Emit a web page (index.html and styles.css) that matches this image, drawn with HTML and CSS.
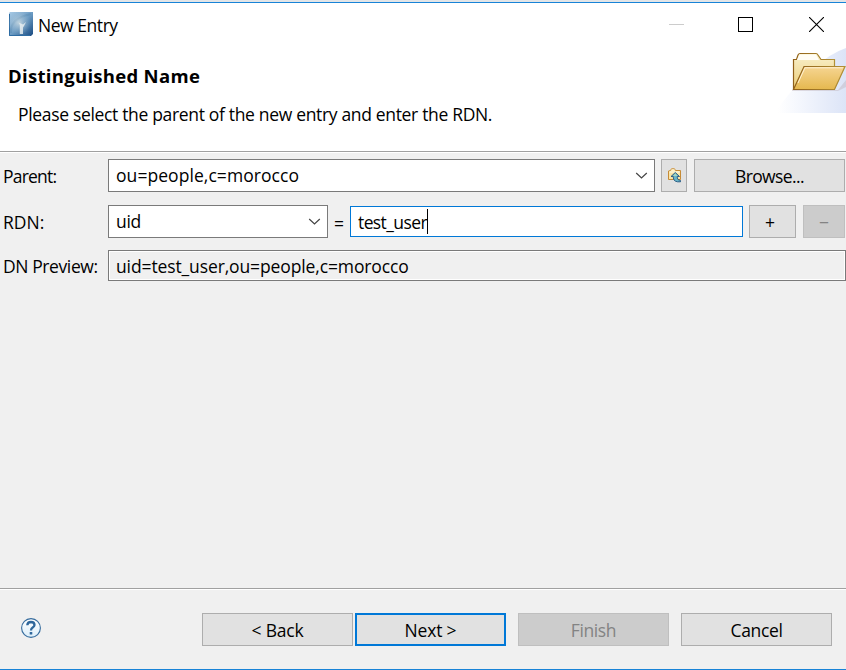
FILE: index.html
```html
<!DOCTYPE html>
<html lang="en">
<head>
<meta charset="utf-8">
<title>New Entry</title>
<link rel="stylesheet" href="styles.css">
</head>
<body>
<main class="dialog">
  <header class="header">
    <div class="titlebar">
      <svg class="app-icon" width="24" height="24" viewBox="0 0 24 24">
        <defs>
          <linearGradient id="app" x1="0" y1="0" x2="1" y2="1"><stop offset="0" stop-color="#a9cbe6"/><stop offset=".5" stop-color="#6c9cc4"/><stop offset="1" stop-color="#174880"/></linearGradient>
          <radialGradient id="glow" cx=".42" cy=".45" r=".5"><stop offset="0" stop-color="#e1e8e8" stop-opacity=".7"/><stop offset="1" stop-color="#9bb9cd" stop-opacity="0"/></radialGradient>
        </defs>
        <path d="M1 0H24V22L22 24H0V1Z" fill="url(#app)"/>
        <path d="M0.5 2V23.5H21" fill="none" stroke="#2e6ca3"/>
        <path d="M2 21C1 11 8 5 22 2" fill="none" stroke="#497da7" stroke-width="2" opacity=".3"/>
        <rect width="24" height="24" fill="url(#glow)"/>
        <path d="M10.8 22V13L10 11L12 11.5L14 12.5L17 10L15 14L14 15.5V22Z" fill="#eef3f3" opacity=".8"/>
      </svg>
      <h1 class="window-title">New Entry</h1>
      <div class="window-controls">
        <svg width="15" height="15" viewBox="0 0 15 15"><path d="M0 7.5H15" stroke="#ccc"/></svg>
        <svg width="15" height="15" viewBox="0 0 15 15"><rect x=".5" y=".5" width="14" height="14" fill="none" stroke="#000"/></svg>
        <svg width="15" height="15" viewBox="0 0 15 15"><path d="M0 0L15 15M15 0L0 15" stroke="#000" stroke-width="1.1"/></svg>
      </div>
    </div>
    <div class="banner">
      <div class="banner-text">
        <h2 class="heading">Distinguished Name</h2>
        <p class="description">Please select the parent of the new entry and enter the RDN.</p>
      </div>
      <svg class="folder" width="68" height="69" viewBox="0 0 68 69">
        <defs>
          <linearGradient id="haze"><stop offset="0" stop-color="#fff"/><stop offset=".35" stop-color="#f3f6fd"/><stop offset="1" stop-color="#dce4f7"/></linearGradient>
          <linearGradient id="back" x1="0" y1="0" x2="0" y2="1"><stop offset="0" stop-color="#f9f1ce"/><stop offset="1" stop-color="#eccd76"/></linearGradient>
          <linearGradient id="front" x1="0" y1="0" x2="0" y2="1"><stop offset="0" stop-color="#f6d592"/><stop offset="1" stop-color="#e5b84f"/></linearGradient>
          <linearGradient id="edge" x1="0" y1="0" x2="1" y2="0"><stop offset="0" stop-color="#916019"/><stop offset="1" stop-color="#b29136"/></linearGradient>
        </defs>
        <path d="M0 64Q38 14 68 4V69H0Z" fill="url(#haze)"/>
        <path d="M14 46H60L68 36V43L60 47H14Z" fill="#bbaeb6" opacity=".4"/>
        <path d="M15.5 45.5V15.5H18.5L20 11Q20.7 9.5 22 9.5H38Q39.3 9.5 40 11L43 15.5H56.5V23L50 45Z" fill="url(#back)" stroke="url(#edge)" stroke-width="1.2"/>
        <path d="M19 16L21.5 10.5H38L41 16Z" fill="#fffdf5"/>
        <path d="M15.5 45.5L26 22.5H67L56.5 45.5Z" fill="url(#front)" stroke="url(#edge)" stroke-width="1.2"/>
        <path d="M20 39L27 23.8H65" fill="none" stroke="#fff1d3"/>
      </svg>
    </div>
  </header>

  <section class="form">
    <div class="row row-parent">
      <span class="label t-parent">Parent:</span>
      <div class="combo combo-parent"><span class="t-dn">ou=people,c=morocco</span><svg width="13" height="8" viewBox="0 0 13 8"><path d="M1.2 1L6.5 6L11.8 1" fill="none" stroke="#444" stroke-width="1.2"/></svg></div>
      <button class="button button-up" aria-label="Parent folder">
        <svg width="14" height="15" viewBox="0 0 14 15">
          <path d="M.5 11.5V3L2.5 2.5L3.5.8H6.5L7.5 2.5H12.5V11.5Z" fill="#fae4a5" stroke="#c68b36"/>
          <path d="M1.5 4H11.5M3.5 2H6.5" stroke="#fffceb"/>
          <path d="M7.3 4.5L11.5 8.5H9.3V10Q9.5 12 12.5 12.5V13.8Q6 14.5 5.3 10V8.5H3Z" fill="#69b4c6" stroke="#24557f" stroke-width=".9"/>
          <path d="M7.3 5.5L9.5 8H5Z" fill="#a8d7bd"/>
        </svg>
      </button>
      <button class="button button-browse"><span class="t-browse">Browse...</span></button>
    </div>
    <div class="row row-rdn">
      <span class="label">RDN:</span>
      <div class="combo combo-rdn"><span class="t-uid">uid</span><svg width="13" height="8" viewBox="0 0 13 8"><path d="M1.2 1L6.5 6L11.8 1" fill="none" stroke="#444" stroke-width="1.2"/></svg></div>
      <span class="equals">=</span>
      <div class="input"><span class="t-user">test_user</span><i class="caret"></i></div>
      <button class="button button-plus">+</button>
      <button class="button button-minus" disabled>−</button>
    </div>
    <div class="row row-preview">
      <span class="label t-preview">DN Preview:</span>
      <div class="preview"><span class="t-full">uid=test_user,ou=people,c=morocco</span></div>
    </div>
  </section>

  <footer class="footer">
    <svg class="help" width="20" height="20" viewBox="0 0 20 20">
      <defs><linearGradient id="help" x1="0" y1="0" x2="0" y2="1"><stop offset="0" stop-color="#fff"/><stop offset="1" stop-color="#dceefa"/></linearGradient></defs>
      <circle cx="10" cy="10" r="9.4" fill="url(#help)" stroke="#356b9d" stroke-width="1.1"/>
      <path d="M6.3 7.2Q6.5 4 10 4Q13.5 4.1 13.5 7Q13.5 8.3 11.7 9.4Q10 10.4 10 12.5" fill="none" stroke="#2e669b" stroke-width="2.3"/>
      <rect x="8.7" y="14" width="2.6" height="2.5" rx=".6" fill="#2e669b"/>
    </svg>
    <div class="actions">
      <button class="button action"><span class="t-back">&lt; Back</span></button>
      <button class="button action primary"><span class="t-next">Next &gt;</span></button>
      <button class="button action finish" disabled><span class="t-finish">Finish</span></button>
      <button class="button action cancel"><span class="t-cancel">Cancel</span></button>
    </div>
  </footer>
</main>
</body>
</html>
```
FILE: styles.css
```css
* { box-sizing: border-box; }
body {
  margin: 0;
  font-family: "Open Sans", "Noto Sans", sans-serif;
  font-size: 17.5px;
  line-height: 24px;
  color: #000;
  background: #f0f0f0;
}
h1, h2, p { margin: 0; font: inherit; }
svg { display: block; flex: none; }
span, h1, h2, p { white-space: nowrap; }

.dialog {
  display: flex;
  flex-direction: column;
  width: 846px;
  height: 670px;
  overflow: hidden;
  border-bottom: 1px solid #1883d7;
}
.header {
  height: 153px;
  background: #fff;
  border-top: 2px solid #e3e5e7;
  box-shadow: inset 0 1px #1883d7, inset 0 -1px #fff, inset 0 -2px #a0a0a0;
}
.titlebar {
  display: flex;
  height: 42px;
  padding: 10px 22px 0 9px;
}
.window-title { margin: 1px 0 0 5px; letter-spacing: -0.45px; }
.window-controls { display: flex; gap: 55px; margin: 5px 0 0 auto; }
.window-controls svg:first-child { margin-right: -1px; }
.window-controls svg:last-child { margin-left: 1px; }
.banner { display: flex; justify-content: space-between; }
.banner-text { padding: 20px 0 0 8px; }
.heading { font-size: 18.5px; font-weight: 700; letter-spacing: 0.3px; }
.description { margin: 14px 0 0 10px; letter-spacing: -0.33px; }

.form { flex: 1; padding: 6px 0 0; }
.row { display: flex; align-items: center; height: 33px; }
.row-rdn { margin-top: 13px; }
.row-preview { height: 31px; margin-top: 12px; }
.label { width: 108px; padding: 0 0 0 3px; }
.combo, .input, .preview {
  display: flex;
  align-items: center;
  height: 33px;
  padding: 0 7px;
  background: #fff;
  border: 1px solid #7a7a7a;
}
.combo { justify-content: space-between; padding-right: 6px; }
.combo span { padding-bottom: 2px; }
.combo-parent { width: 547px; }
.combo-rdn { width: 220px; }
.equals { width: 22px; padding-top: 2px; text-align: center; }
.input { width: 393px; height: 31px; border-color: #0078d7; }
.caret { width: 1px; height: 25px; background: #000; }
.preview { width: 738px; height: 31px; background: #f0f0f0; box-shadow: inset 0 0 0 1px #fff; }

.button {
  display: flex;
  align-items: center;
  justify-content: center;
  flex: none;
  height: 33px;
  padding: 1px 0 0;
  font: inherit;
  color: #000;
  background: #e1e1e1;
  border: 1px solid #adadad;
}
.button:disabled { color: #838383; background: #ccc; border-color: #bfbfbf; }
.button-up { width: 26px; margin-left: 6px; padding: 0 0 0 1px; }
.button-browse { width: 151px; margin-left: 7px; }
.button-plus { width: 47px; margin-left: 6px; padding-right: 5px; }
.button-minus { width: 42px; margin-left: 7px; }

.t-parent { letter-spacing: -0.8px; }
.t-dn { letter-spacing: 0.06px; }
.t-uid { letter-spacing: -0.3px; }
.t-preview { letter-spacing: -0.4px; }
.t-user { letter-spacing: -0.6px; }
.t-full { letter-spacing: -0.12px; }
.t-browse { letter-spacing: -0.6px; }
.t-back { letter-spacing: -0.2px; }
.t-next { letter-spacing: -0.2px; }
.t-finish { letter-spacing: -0.4px; }
.t-cancel { letter-spacing: -0.35px; }

.footer {
  display: flex;
  height: 81px;
  padding: 24px 14px 0 21px;
  border-top: 1px solid #a0a0a0;
  box-shadow: inset 0 1px #fff;
}
.help { margin-top: 5px; }
.actions { display: flex; margin-left: auto; }
.action { width: 151px; }
.primary { margin-left: 2px; border: 2px solid #0078d7; }
.finish, .cancel { margin-left: 12px; }
```
